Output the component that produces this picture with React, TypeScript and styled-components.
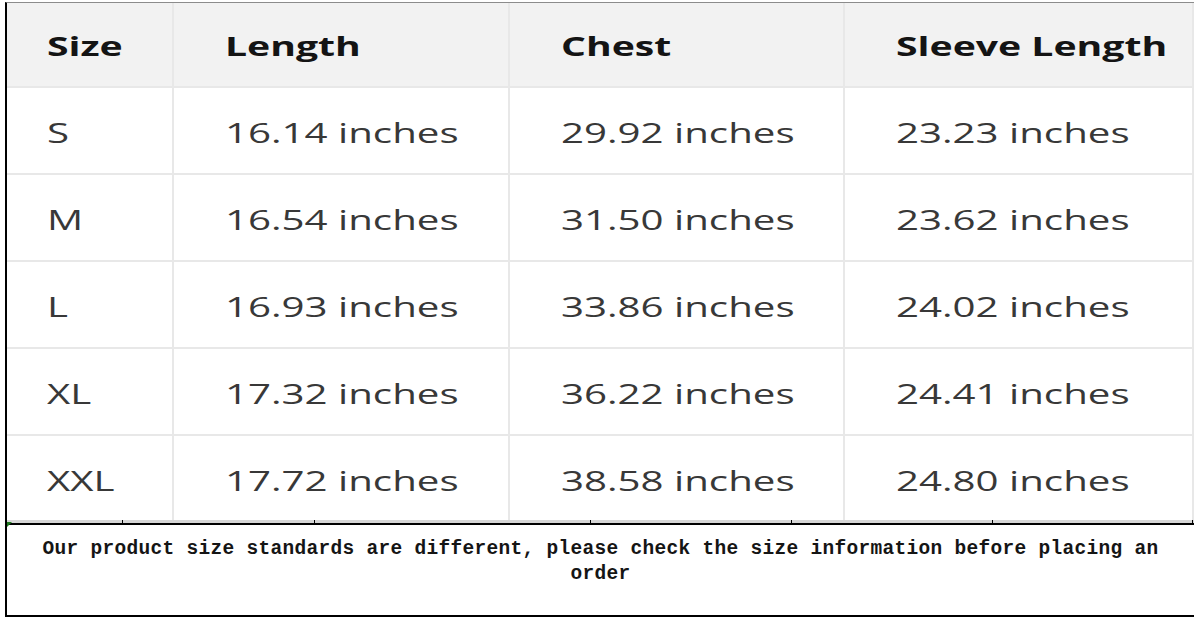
import styled, { createGlobalStyle } from "styled-components";

const GlobalStyle = createGlobalStyle`
  html, body {
    margin: 0;
    padding: 0;
    background: #ffffff;
  }
`;

const Sheet = styled.div`
  margin: 2px 0 0 5px;
  height: 615px;
  border-left: 2px solid #000;
  border-top: 1px solid #8c8c8c;
  display: flex;
  flex-direction: column;
  box-sizing: border-box;
  overflow: hidden;
`;

const Table = styled.div`
  display: grid;
  grid-template-columns: 167px 336px 335px 1fr;
  grid-template-rows: 85px repeat(4, 87px) 84px;
  font-family: "Open Sans", "Noto Sans", sans-serif;
`;

const Cell = styled.div<{ $head?: boolean; $first?: boolean; $last?: boolean }>`
  display: flex;
  align-items: center;
  box-sizing: border-box;
  padding-left: ${(p) => (p.$first ? "40px" : "51px")};
  padding-top: ${(p) => (p.$head ? "1px" : "4px")};
  background: ${(p) => (p.$head ? "#f2f2f2" : "#ffffff")};
  border-bottom: ${(p) => (p.$last ? "none" : "2px solid #e8e8e8")};
  border-right: 2px solid #e8e8e8;
  overflow: hidden;
  white-space: nowrap;
`;

const Label = styled.span<{ $head?: boolean }>`
  display: inline-block;
  font-size: 27px;
  font-weight: ${(p) => (p.$head ? 700 : 500)};
  color: ${(p) => (p.$head ? "#141414" : "#383838")};
  transform: scaleX(${(p) => (p.$head ? 1.45 : 1.49)});
  transform-origin: left center;
`;

const Ruler = styled.div`
  display: flex;
  height: 3px;
  background: #d6d6d6;
  border-bottom: 2px solid #000;
  position: relative;
`;

const RulerSegment = styled.div<{ $w: number }>`
  flex: 0 0 ${(p) => p.$w}px;
  border-right: 1px solid #000;
  box-sizing: border-box;
`;

const Corner = styled.div`
  position: absolute;
  left: 0;
  top: 2px;
  width: 0;
  height: 0;
  border-top: 5px solid #1e7a1e;
  border-right: 5px solid transparent;
`;

const Note = styled.div`
  flex: 1;
  border-bottom: 2px solid #000;
  padding: 12px 10px 0;
  text-align: center;
  font-family: "Liberation Mono", "DejaVu Sans Mono", monospace;
  font-size: 19.5px;
  font-weight: 700;
  letter-spacing: 0.3px;
  line-height: 25px;
  color: #151515;
`;

const headers = ["Size", "Length", "Chest", "Sleeve Length"];

const rows = [
  ["S", "16.14 inches", "29.92 inches", "23.23 inches"],
  ["M", "16.54 inches", "31.50 inches", "23.62 inches"],
  ["L", "16.93 inches", "33.86 inches", "24.02 inches"],
  ["XL", "17.32 inches", "36.22 inches", "24.41 inches"],
  ["XXL", "17.72 inches", "38.58 inches", "24.80 inches"],
];

const ruler = [116, 192, 276, 201, 201, 200];

function App() {
  return (
    <>
      <GlobalStyle />
      <Sheet>
        <Table>
          {headers.map((h, i) => (
            <Cell key={h} $head $first={i === 0}>
              <Label $head>{h}</Label>
            </Cell>
          ))}
          {rows.map((r, ri) =>
            r.map((c, ci) => (
              <Cell key={ri + "-" + ci} $first={ci === 0} $last={ri === rows.length - 1}>
                <Label>{c}</Label>
              </Cell>
            ))
          )}
        </Table>
        <Ruler>
          {ruler.map((w, i) => (
            <RulerSegment key={i} $w={w} />
          ))}
          <Corner />
        </Ruler>
        <Note>
          Our product size standards are different, please check the size information before placing an order
        </Note>
      </Sheet>
    </>
  );
}

export default App;
